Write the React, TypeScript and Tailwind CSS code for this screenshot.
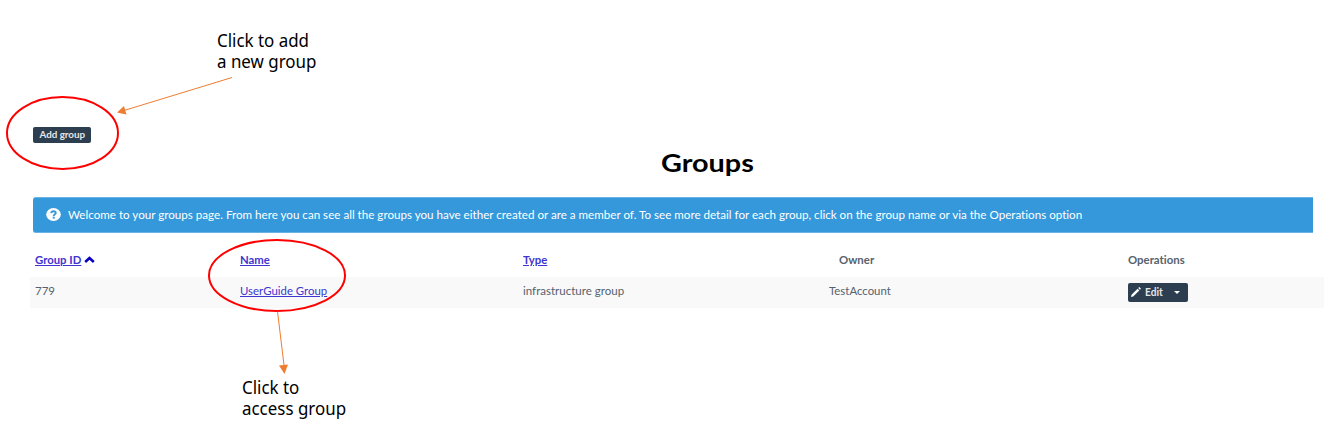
import type { ReactNode } from "react";

function SortLink({ children }: { children: ReactNode }) {
  return (
    <a className="inline-block origin-left scale-x-[0.945] font-bold text-[#3f35cf] underline underline-offset-1">
      {children}
    </a>
  );
}

function Cell({ children, className = "" }: { children: ReactNode; className?: string }) {
  return <div className={`flex items-center ${className}`}>{children}</div>;
}

function Note({ lines, className }: { lines: string[]; className: string }) {
  return (
    <div
      className={`absolute origin-top-left scale-x-[0.94] font-['Noto_Sans',sans-serif] text-[18px] leading-[21px] whitespace-nowrap text-black ${className}`}
    >
      {lines.map((line) => (
        <div key={line}>{line}</div>
      ))}
    </div>
  );
}

const columns = "grid grid-cols-[204px_284px_306px_298px_1fr]";

export default function App() {
  return (
    <div className="relative h-[440px] w-[1336px] overflow-hidden bg-white font-['Lato',sans-serif] text-[12px] text-[#56626d] [font-variant-ligatures:none]">
      <div className="px-[33px] pt-[127px]">
        <button className="flex h-4 w-[58px] items-center justify-center rounded-[2px] bg-[#2c3e50] pb-0.5 text-[10px] font-bold text-[#e4e7ea]">
          <span className="inline-block scale-x-[0.98]">Add group</span>
        </button>
      </div>

      <h1 className="flex h-[54px] items-start pt-1 pl-[661px] text-[24px] leading-[32px] font-bold text-black">
        <span className="inline-block origin-left scale-x-[1.2]">Groups</span>
      </h1>

      <div className="ml-[33px] flex h-9 w-[1280px] items-center rounded-l-[3px] border-y border-[#68b2e6] bg-[#3498db] pl-[13px] text-white">
        <svg viewBox="0 0 16 14" className="h-[14px] w-[15px] shrink-0" preserveAspectRatio="none">
          <ellipse cx="8" cy="6.500" rx="7.800" ry="6.400" fill="white" />
          <path d="M5.500 5.200C5.700 3.700 6.800 3.200 8 3.200c1.400 0 2.400.6 2.400 1.700C10.400 6.300 8.200 6.200 8.200 8" fill="none" stroke="#3498db" strokeWidth="2" />
          <rect x="7.200" y="8.700" width="2.100" height="1.900" fill="#3498db" />
        </svg>
        <span className="ml-[7px] inline-block origin-left scale-x-[1.056] text-[11px] whitespace-nowrap">
          Welcome to your groups page. From here you can see all the groups you have either created or are a member of.
          To see more detail for each group, click on the group name or via the Operations option
        </span>
      </div>

      <div className="ml-[30px] w-[1294px] pt-[11px]">
        <div className={`${columns} h-[33px] font-bold`}>
          <Cell className="pb-0.5 pl-[5px]">
            <SortLink>Group ID</SortLink>
            <svg viewBox="0 0 11 7" className="h-[7px] w-[11px]">
              <path d="M1.200 6 5.500 2 9.800 6" fill="none" stroke="#0b00c4" strokeWidth="2.600" />
            </svg>
          </Cell>
          <Cell className="pb-0.5 pl-1.5">
            <SortLink>Name</SortLink>
          </Cell>
          <Cell className="pb-0.5 pl-[5px]">
            <SortLink>Type</SortLink>
          </Cell>
          <Cell className="pb-0.5 pl-[15px]">
            <span className="inline-block origin-left scale-x-95">Owner</span>
          </Cell>
          <Cell className="pb-0.5 pl-1.5">
            <span className="inline-block origin-left scale-x-95">Operations</span>
          </Cell>
        </div>

        <div className={`${columns} h-[31px] bg-[#f9f9f9]`}>
          <Cell className="pb-[3px] pl-[5px]">
            <span className="inline-block origin-left scale-x-[0.96]">779</span>
          </Cell>
          <Cell className="pb-[3px] pl-1.5">
            <a className="inline-block origin-left scale-x-[0.95] text-[#3f35cf] underline underline-offset-1">
              UserGuide Group
            </a>
          </Cell>
          <Cell className="pb-[3px] pl-[5px]">
            <span className="inline-block origin-left scale-x-[0.96]">infrastructure group</span>
          </Cell>
          <Cell className="pb-[3px] pl-[5px]">
            <span className="inline-block origin-left scale-x-[0.95]">TestAccount</span>
          </Cell>
          <Cell className="pb-px pl-1.5">
            <button className="flex h-[19px] w-[60px] items-center rounded-[2px] bg-[#2c3e50] pl-[3px] text-[11px] font-bold text-[#e4e7ea]">
              <svg viewBox="0 0 10 10" className="-mt-px h-[10px] w-[10px] shrink-0" fill="#fff">
                <path d="M0 10 .5 7.800 6.600 1.700 8.300 3.400 2.200 9.500zM7.200 1.100 8.300 0 10 1.700 8.900 2.800z" />
              </svg>
              <span className="ml-1 inline-block origin-left scale-x-[0.92]">Edit</span>
              <svg viewBox="0 0 6 3" className="ml-2.5 h-[3px] w-[6px] shrink-0" fill="#fff">
                <path d="M0 0H6L3 3z" />
              </svg>
            </button>
          </Cell>
        </div>
      </div>

      <Note lines={["Click to add", "a new group"]} className="top-[30px] left-[217px]" />
      <Note lines={["Click to", "access group"]} className="top-[377px] left-[242px]" />

      <svg viewBox="0 0 1336 440" className="pointer-events-none absolute inset-0 h-[440px] w-[1336px]" fill="none">
        <g stroke="#ff0000" strokeWidth="2">
          <ellipse cx="62.500" cy="133" rx="55.500" ry="36" />
          <ellipse cx="277" cy="275.500" rx="68" ry="35.500" />
        </g>
        <g stroke="#ed7d31" strokeWidth="1">
          <path d="M232 77.500 124 110.500" />
          <path d="M277.500 311.500 284 365" />
        </g>
        <g fill="#ed7d31">
          <path d="M117 112.500 124 106 126.500 114.500z" />
          <path d="M284.500 374 279 365.500 288 364.500z" />
        </g>
      </svg>
    </div>
  );
}
